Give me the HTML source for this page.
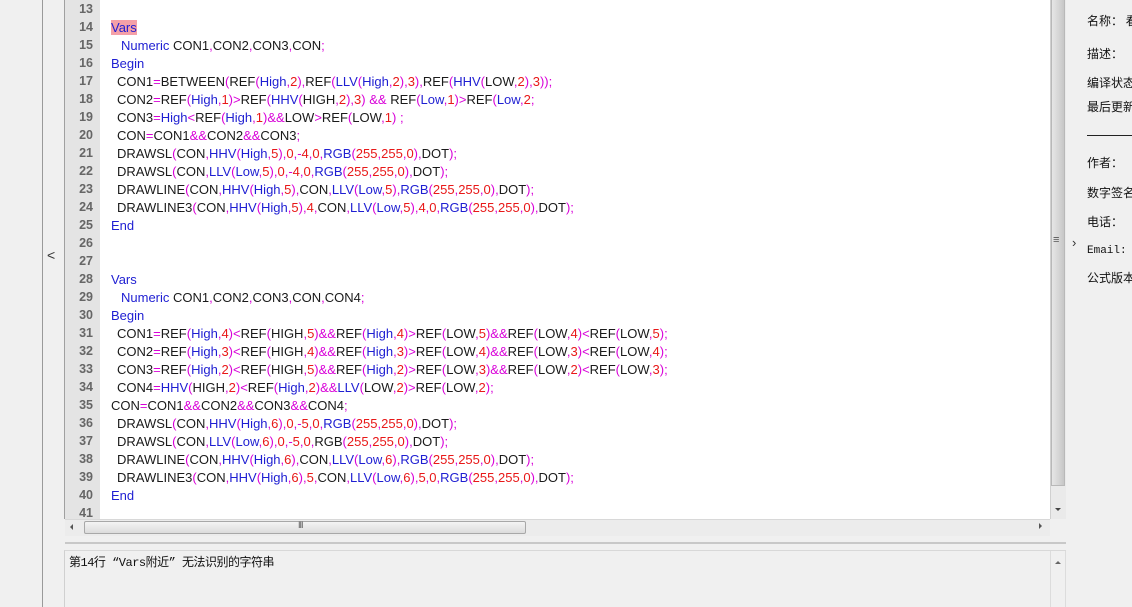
<!DOCTYPE html>
<html><head><meta charset="utf-8"><style>
*{margin:0;padding:0;box-sizing:border-box}
body{width:1132px;height:607px;background:#f0f0f0;position:relative;overflow:hidden;font-family:"Liberation Sans","Noto Sans CJK SC",sans-serif}
.abs{position:absolute}
#ed{left:64px;top:0;width:987px;height:519px;background:#fff;border-left:1px solid #a0a0a0}
#gut{left:65px;top:0;width:35px;height:519px;background:#e4e4e4}
.ln{position:absolute;left:65px;width:28px;text-align:right;font-size:12.5px;font-weight:bold;color:#666;height:18px;line-height:18px}
.cl{position:absolute;left:111px;font-size:13px;height:18px;line-height:19px;color:#1a1a1a;white-space:pre;letter-spacing:0}
.o{color:#d800d8}.n{color:#e81818}.k{color:#1e1ed2}
.hl{background:#f4a0a8}
.rp{position:absolute;left:1087px;font-size:12px;color:#111;font-family:"Noto Sans CJK SC","WenQuanYi Zen Hei",sans-serif;line-height:14px}
</style></head><body>
<div class="abs" style="left:42px;top:0;width:1px;height:607px;background:#9a9a9a"></div>
<div class="abs" style="left:47px;top:247px;font-size:14px;color:#333">&lt;</div>
<div id="ed" class="abs"></div>
<div id="gut" class="abs"></div>

<div class="ln" style="top:0">13</div>
<div class="ln" style="top:18px">14</div>
<div class="ln" style="top:36px">15</div>
<div class="ln" style="top:54px">16</div>
<div class="ln" style="top:72px">17</div>
<div class="ln" style="top:90px">18</div>
<div class="ln" style="top:108px">19</div>
<div class="ln" style="top:126px">20</div>
<div class="ln" style="top:144px">21</div>
<div class="ln" style="top:162px">22</div>
<div class="ln" style="top:180px">23</div>
<div class="ln" style="top:198px">24</div>
<div class="ln" style="top:216px">25</div>
<div class="ln" style="top:234px">26</div>
<div class="ln" style="top:252px">27</div>
<div class="ln" style="top:270px">28</div>
<div class="ln" style="top:288px">29</div>
<div class="ln" style="top:306px">30</div>
<div class="ln" style="top:324px">31</div>
<div class="ln" style="top:342px">32</div>
<div class="ln" style="top:360px">33</div>
<div class="ln" style="top:378px">34</div>
<div class="ln" style="top:396px">35</div>
<div class="ln" style="top:414px">36</div>
<div class="ln" style="top:432px">37</div>
<div class="ln" style="top:450px">38</div>
<div class="ln" style="top:468px">39</div>
<div class="ln" style="top:486px">40</div>
<div class="ln" style="top:504px;height:15px;overflow:hidden">41</div>

<div class="cl" style="top:18px"><span class="k hl">Vars</span></div>
<div class="cl" style="top:36px;left:121px"><span class="k">Numeric</span> CON1<span class="o">,</span>CON2<span class="o">,</span>CON3<span class="o">,</span>CON<span class="o">;</span></div>
<div class="cl" style="top:54px"><span class="k">Begin</span></div>
<div class="cl" style="top:72px;left:117px">CON1<span class="o">=</span>BETWEEN<span class="o">(</span>REF<span class="o">(</span><span class="k">High</span><span class="o">,</span><span class="n">2</span><span class="o">),</span>REF<span class="o">(</span><span class="k">LLV</span><span class="o">(</span><span class="k">High</span><span class="o">,</span><span class="n">2</span><span class="o">),</span><span class="n">3</span><span class="o">),</span>REF<span class="o">(</span><span class="k">HHV</span><span class="o">(</span>LOW<span class="o">,</span><span class="n">2</span><span class="o">),</span><span class="n">3</span><span class="o">));</span></div>
<div class="cl" style="top:90px;left:117px">CON2<span class="o">=</span>REF<span class="o">(</span><span class="k">High</span><span class="o">,</span><span class="n">1</span><span class="o">)&gt;</span>REF<span class="o">(</span><span class="k">HHV</span><span class="o">(</span>HIGH<span class="o">,</span><span class="n">2</span><span class="o">),</span><span class="n">3</span><span class="o">) &amp;&amp;</span> REF<span class="o">(</span><span class="k">Low</span><span class="o">,</span><span class="n">1</span><span class="o">)&gt;</span>REF<span class="o">(</span><span class="k">Low</span><span class="o">,</span><span class="n">2</span><span class="o">;</span></div>
<div class="cl" style="top:108px;left:117px">CON3<span class="o">=</span><span class="k">High</span><span class="o">&lt;</span>REF<span class="o">(</span><span class="k">High</span><span class="o">,</span><span class="n">1</span><span class="o">)&amp;&amp;</span>LOW<span class="o">&gt;</span>REF<span class="o">(</span>LOW<span class="o">,</span><span class="n">1</span><span class="o">) ;</span></div>
<div class="cl" style="top:126px;left:117px">CON<span class="o">=</span>CON1<span class="o">&amp;&amp;</span>CON2<span class="o">&amp;&amp;</span>CON3<span class="o">;</span></div>
<div class="cl" style="top:144px;left:117px">DRAWSL<span class="o">(</span>CON<span class="o">,</span><span class="k">HHV</span><span class="o">(</span><span class="k">High</span><span class="o">,</span><span class="n">5</span><span class="o">),</span><span class="n">0</span><span class="o">,-</span><span class="n">4</span><span class="o">,</span><span class="n">0</span><span class="o">,</span><span class="k">RGB</span><span class="o">(</span><span class="n">255</span><span class="o">,</span><span class="n">255</span><span class="o">,</span><span class="n">0</span><span class="o">),</span>DOT<span class="o">);</span></div>
<div class="cl" style="top:162px;left:117px">DRAWSL<span class="o">(</span>CON<span class="o">,</span><span class="k">LLV</span><span class="o">(</span><span class="k">Low</span><span class="o">,</span><span class="n">5</span><span class="o">),</span><span class="n">0</span><span class="o">,-</span><span class="n">4</span><span class="o">,</span><span class="n">0</span><span class="o">,</span><span class="k">RGB</span><span class="o">(</span><span class="n">255</span><span class="o">,</span><span class="n">255</span><span class="o">,</span><span class="n">0</span><span class="o">),</span>DOT<span class="o">);</span></div>
<div class="cl" style="top:180px;left:117px">DRAWLINE<span class="o">(</span>CON<span class="o">,</span><span class="k">HHV</span><span class="o">(</span><span class="k">High</span><span class="o">,</span><span class="n">5</span><span class="o">),</span>CON<span class="o">,</span><span class="k">LLV</span><span class="o">(</span><span class="k">Low</span><span class="o">,</span><span class="n">5</span><span class="o">),</span><span class="k">RGB</span><span class="o">(</span><span class="n">255</span><span class="o">,</span><span class="n">255</span><span class="o">,</span><span class="n">0</span><span class="o">),</span>DOT<span class="o">);</span></div>
<div class="cl" style="top:198px;left:117px">DRAWLINE3<span class="o">(</span>CON<span class="o">,</span><span class="k">HHV</span><span class="o">(</span><span class="k">High</span><span class="o">,</span><span class="n">5</span><span class="o">),</span><span class="n">4</span><span class="o">,</span>CON<span class="o">,</span><span class="k">LLV</span><span class="o">(</span><span class="k">Low</span><span class="o">,</span><span class="n">5</span><span class="o">),</span><span class="n">4</span><span class="o">,</span><span class="n">0</span><span class="o">,</span><span class="k">RGB</span><span class="o">(</span><span class="n">255</span><span class="o">,</span><span class="n">255</span><span class="o">,</span><span class="n">0</span><span class="o">),</span>DOT<span class="o">);</span></div>
<div class="cl" style="top:216px"><span class="k">End</span></div>
<div class="cl" style="top:270px"><span class="k">Vars</span></div>
<div class="cl" style="top:288px;left:121px"><span class="k">Numeric</span> CON1<span class="o">,</span>CON2<span class="o">,</span>CON3<span class="o">,</span>CON<span class="o">,</span>CON4<span class="o">;</span></div>
<div class="cl" style="top:306px"><span class="k">Begin</span></div>
<div class="cl" style="top:324px;left:117px">CON1<span class="o">=</span>REF<span class="o">(</span><span class="k">High</span><span class="o">,</span><span class="n">4</span><span class="o">)&lt;</span>REF<span class="o">(</span>HIGH<span class="o">,</span><span class="n">5</span><span class="o">)&amp;&amp;</span>REF<span class="o">(</span><span class="k">High</span><span class="o">,</span><span class="n">4</span><span class="o">)&gt;</span>REF<span class="o">(</span>LOW<span class="o">,</span><span class="n">5</span><span class="o">)&amp;&amp;</span>REF<span class="o">(</span>LOW<span class="o">,</span><span class="n">4</span><span class="o">)&lt;</span>REF<span class="o">(</span>LOW<span class="o">,</span><span class="n">5</span><span class="o">);</span></div>
<div class="cl" style="top:342px;left:117px">CON2<span class="o">=</span>REF<span class="o">(</span><span class="k">High</span><span class="o">,</span><span class="n">3</span><span class="o">)&lt;</span>REF<span class="o">(</span>HIGH<span class="o">,</span><span class="n">4</span><span class="o">)&amp;&amp;</span>REF<span class="o">(</span><span class="k">High</span><span class="o">,</span><span class="n">3</span><span class="o">)&gt;</span>REF<span class="o">(</span>LOW<span class="o">,</span><span class="n">4</span><span class="o">)&amp;&amp;</span>REF<span class="o">(</span>LOW<span class="o">,</span><span class="n">3</span><span class="o">)&lt;</span>REF<span class="o">(</span>LOW<span class="o">,</span><span class="n">4</span><span class="o">);</span></div>
<div class="cl" style="top:360px;left:117px">CON3<span class="o">=</span>REF<span class="o">(</span><span class="k">High</span><span class="o">,</span><span class="n">2</span><span class="o">)&lt;</span>REF<span class="o">(</span>HIGH<span class="o">,</span><span class="n">5</span><span class="o">)&amp;&amp;</span>REF<span class="o">(</span><span class="k">High</span><span class="o">,</span><span class="n">2</span><span class="o">)&gt;</span>REF<span class="o">(</span>LOW<span class="o">,</span><span class="n">3</span><span class="o">)&amp;&amp;</span>REF<span class="o">(</span>LOW<span class="o">,</span><span class="n">2</span><span class="o">)&lt;</span>REF<span class="o">(</span>LOW<span class="o">,</span><span class="n">3</span><span class="o">);</span></div>
<div class="cl" style="top:378px;left:117px">CON4<span class="o">=</span><span class="k">HHV</span><span class="o">(</span>HIGH<span class="o">,</span><span class="n">2</span><span class="o">)&lt;</span>REF<span class="o">(</span><span class="k">High</span><span class="o">,</span><span class="n">2</span><span class="o">)&amp;&amp;</span><span class="k">LLV</span><span class="o">(</span>LOW<span class="o">,</span><span class="n">2</span><span class="o">)&gt;</span>REF<span class="o">(</span>LOW<span class="o">,</span><span class="n">2</span><span class="o">);</span></div>
<div class="cl" style="top:396px">CON<span class="o">=</span>CON1<span class="o">&amp;&amp;</span>CON2<span class="o">&amp;&amp;</span>CON3<span class="o">&amp;&amp;</span>CON4<span class="o">;</span></div>
<div class="cl" style="top:414px;left:117px">DRAWSL<span class="o">(</span>CON<span class="o">,</span><span class="k">HHV</span><span class="o">(</span><span class="k">High</span><span class="o">,</span><span class="n">6</span><span class="o">),</span><span class="n">0</span><span class="o">,-</span><span class="n">5</span><span class="o">,</span><span class="n">0</span><span class="o">,</span><span class="k">RGB</span><span class="o">(</span><span class="n">255</span><span class="o">,</span><span class="n">255</span><span class="o">,</span><span class="n">0</span><span class="o">),</span>DOT<span class="o">);</span></div>
<div class="cl" style="top:432px;left:117px">DRAWSL<span class="o">(</span>CON<span class="o">,</span><span class="k">LLV</span><span class="o">(</span><span class="k">Low</span><span class="o">,</span><span class="n">6</span><span class="o">),</span><span class="n">0</span><span class="o">,-</span><span class="n">5</span><span class="o">,</span><span class="n">0</span><span class="o">,</span>RGB<span class="o">(</span><span class="n">255</span><span class="o">,</span><span class="n">255</span><span class="o">,</span><span class="n">0</span><span class="o">),</span>DOT<span class="o">);</span></div>
<div class="cl" style="top:450px;left:117px">DRAWLINE<span class="o">(</span>CON<span class="o">,</span><span class="k">HHV</span><span class="o">(</span><span class="k">High</span><span class="o">,</span><span class="n">6</span><span class="o">),</span>CON<span class="o">,</span><span class="k">LLV</span><span class="o">(</span><span class="k">Low</span><span class="o">,</span><span class="n">6</span><span class="o">),</span><span class="k">RGB</span><span class="o">(</span><span class="n">255</span><span class="o">,</span><span class="n">255</span><span class="o">,</span><span class="n">0</span><span class="o">),</span>DOT<span class="o">);</span></div>
<div class="cl" style="top:468px;left:117px">DRAWLINE3<span class="o">(</span>CON<span class="o">,</span><span class="k">HHV</span><span class="o">(</span><span class="k">High</span><span class="o">,</span><span class="n">6</span><span class="o">),</span><span class="n">5</span><span class="o">,</span>CON<span class="o">,</span><span class="k">LLV</span><span class="o">(</span><span class="k">Low</span><span class="o">,</span><span class="n">6</span><span class="o">),</span><span class="n">5</span><span class="o">,</span><span class="n">0</span><span class="o">,</span><span class="k">RGB</span><span class="o">(</span><span class="n">255</span><span class="o">,</span><span class="n">255</span><span class="o">,</span><span class="n">0</span><span class="o">),</span>DOT<span class="o">);</span></div>
<div class="cl" style="top:486px"><span class="k">End</span></div>

<div class="abs" style="left:1050px;top:0;width:16px;height:519px;background:#eaeaea;border-left:1px solid #d0d0d0"></div>
<div class="abs" style="left:1051px;top:0;width:14px;height:486px;background:linear-gradient(to right,#e6e6e6,#d4d4d4 60%,#c6c6c6);border:1px solid #b8b8b8;border-top:none"></div>
<div class="abs" style="left:1053px;top:234px;font-size:11px;color:#555">≡</div>
<div class="abs" style="left:1055px;top:508px;width:0;height:0;border-left:3px solid transparent;border-right:3px solid transparent;border-top:3px solid #444"></div>
<div class="abs" style="left:1072px;top:235px;font-size:13px;color:#333">›</div>

<div class="abs" style="left:65px;top:519px;width:985px;height:17px;background:#ececec;border-top:1px solid #d8d8d8"></div>
<div class="abs" style="left:84px;top:521px;width:442px;height:13px;background:linear-gradient(#f4f4f4,#dcdcdc);border:1px solid #a8a8a8;border-radius:2px"></div>
<div class="abs" style="left:298px;top:520px;font-size:9px;color:#555;letter-spacing:-1px">III</div>
<div class="abs" style="left:70px;top:524px;width:0;height:0;border-top:3px solid transparent;border-bottom:3px solid transparent;border-right:3px solid #555"></div>
<div class="abs" style="left:1039px;top:523px;width:0;height:0;border-top:3px solid transparent;border-bottom:3px solid transparent;border-left:3px solid #555"></div>
<div class="abs" style="left:65px;top:536px;width:1001px;height:6px;background:#f0f0f0"></div>
<div class="abs" style="left:65px;top:542px;width:1001px;height:2px;background:#c8c8c8"></div>

<div class="abs" style="left:64px;top:550px;width:1002px;height:57px;background:#f0f0f0;border-top:1px solid #d8d8d8;border-left:1px solid #d0d0d0"></div>
<div class="abs" style="left:1050px;top:551px;width:16px;height:56px;border-left:1px solid #dcdcdc;border-right:1px solid #dcdcdc"></div>
<div class="abs" style="left:1055px;top:561px;width:0;height:0;border-left:3px solid transparent;border-right:3px solid transparent;border-bottom:3px solid #666"></div>
<div class="abs" style="left:69px;top:553px;font-size:12px;color:#111;font-family:'Liberation Mono','Noto Sans CJK SC',monospace;letter-spacing:-0.5px">第14行 “Vars附近” 无法识别的字符串</div>

<div class="rp" style="top:14px;white-space:nowrap">名称：&nbsp;看</div>
<div class="rp" style="top:47px">描述：</div>
<div class="rp" style="top:76px;white-space:nowrap">编译状态</div>
<div class="rp" style="top:100px;white-space:nowrap">最后更新</div>
<div class="abs" style="left:1087px;top:135px;width:45px;height:1px;background:#222"></div>
<div class="rp" style="top:156px">作者：</div>
<div class="rp" style="top:186px;white-space:nowrap">数字签名</div>
<div class="rp" style="top:215px">电话：</div>
<div class="rp" style="top:244px;font-family:'Liberation Mono',monospace;font-size:11px">Email:</div>
<div class="rp" style="top:271px;white-space:nowrap">公式版本</div>
</body></html>
